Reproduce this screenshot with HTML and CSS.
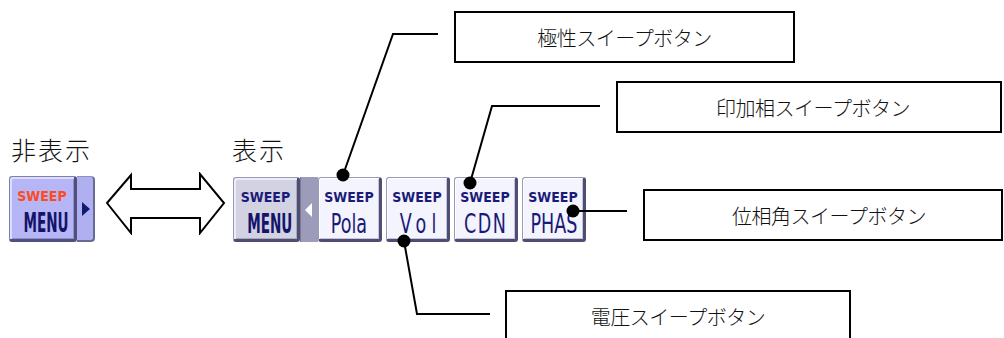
FILE: index.html
```html
<!DOCTYPE html>
<html lang="ja">
<head>
    <meta charset="UTF-8">
    <title>SWEEP MENU</title>
    <link rel="stylesheet" href="styles.css">
</head>
<body>
    <div class="page">
        <div class="stage">
            <div class="group">
                <div class="label">非表示</div>
                <div class="menu-closed">
                    <div class="face">
                        <span class="sw red">SWEEP</span>
                        <span class="big menu">MENU</span>
                    </div>
                    <div class="tab"><span class="tri-right"></span></div>
                </div>
            </div>

            <svg class="arrow" width="120" height="63" viewBox="0 0 120 63">
                <polygon points="1,31 25,3 25,17 94,17 94,2 118,31 94,61 94,46 25,46 25,61" fill="#fff" stroke="#000" stroke-width="2" stroke-linejoin="miter"/>
            </svg>

            <div class="group shown">
                <div class="label">表示</div>
                <div class="toolbar">
                    <div class="btn menu-btn">
                        <span class="sw">SWEEP</span>
                        <span class="big menu">MENU</span>
                    </div>
                    <div class="strip"><span class="tri-left"></span></div>
                    <div class="btn">
                        <span class="sw">SWEEP</span>
                        <span class="big">Pola</span>
                    </div>
                    <div class="btn">
                        <span class="sw">SWEEP</span>
                        <span class="big vol">Vol</span>
                    </div>
                    <div class="btn">
                        <span class="sw">SWEEP</span>
                        <span class="big cdn">CDN</span>
                    </div>
                    <div class="btn">
                        <span class="sw">SWEEP</span>
                        <span class="big">PHAS</span>
                    </div>
                </div>
            </div>
        </div>

        <!-- callouts -->
        <div class="callout c1">極性スイープボタン</div>
        <div class="callout c2">印加相スイープボタン</div>
        <div class="callout c3">位相角スイープボタン</div>
        <div class="callout c4">電圧スイープボタン</div>

        <svg class="leaders" width="1004" height="338" viewBox="0 0 1004 338">
            <g fill="none" stroke="#000" stroke-width="2">
                <path d="M343 175 L393 34 H438"/>
                <path d="M470 183 L492 106 H600"/>
                <path d="M573 211 H627"/>
                <path d="M404 241 L417 314 H490"/>
            </g>
            <g fill="#000">
                <circle cx="343" cy="175" r="6.5"/>
                <circle cx="470" cy="183" r="6.5"/>
                <circle cx="573" cy="211" r="6.5"/>
                <circle cx="404" cy="241" r="6.5"/>
            </g>
        </svg>
    </div>
</body>
</html>
```

FILE: styles.css
```css
body {
    margin: 0;
    background: #fff;
    font-family: "Noto Sans CJK JP", sans-serif;
}
.page {
    position: relative;
    width: 1004px;
    height: 338px;
    overflow: hidden;
    background: #fff;
}
.stage {
    display: flex;
    align-items: flex-start;
    padding: 137px 0 0 9px;
}
.group {
    display: flex;
    flex-direction: column;
}
.label {
    font-size: 25px;
    line-height: 25px;
    font-weight: 300;
    letter-spacing: 2px;
    color: #111;
    margin: 0 0 14px 2px;
}
.shown {
    margin-left: 7px;
}
.shown .label {
    margin-left: -1px;
}
.arrow {
    display: block;
    margin: 35px 0 0 11px;
}

/* buttons */
.sw, .big {
    display: block;
    font-family: "DejaVu Sans Condensed", "DejaVu Sans", sans-serif;
    color: #1a1a78;
    text-align: center;
    white-space: nowrap;
}
.sw {
    font-size: 14px;
    line-height: 14px;
    font-weight: bold;
    margin-top: 12px;
}
.sw.red {
    color: #ff4a1c;
}
.big {
    font-size: 26px;
    line-height: 26px;
    margin-top: 7px;
    transform: scaleX(0.75);
}
.big.menu {
    font-weight: bold;
    transform: scaleX(0.58);
    color: #14146a;
}
.big.vol {
    letter-spacing: 7px;
    text-indent: 7px;
}
.big.cdn {
    letter-spacing: 2px;
    text-indent: 2px;
}

.menu-closed {
    display: flex;
    height: 66px;
}
.menu-closed .face {
    box-sizing: border-box;
    width: 68px;
    height: 66px;
    background: #b6b6f6;
    border: 1px solid #8080b0;
    border-right: 3px solid #50507e;
    border-bottom: 3px solid #50507e;
    border-radius: 3px;
    box-shadow: inset 2px 2px 0 #dcdcff, inset -1px -1px 0 #9090d0;
}
.menu-closed .face .sw {
    margin-top: 12px;
}
.tab {
    box-sizing: border-box;
    width: 18px;
    height: 66px;
    background: #b0b0f0;
    border: 1px solid #9090c8;
    border-left: none;
    border-right: 2px solid #6a6a98;
    border-bottom: 2px solid #6a6a98;
    border-radius: 0 4px 4px 0;
    display: flex;
    align-items: center;
    justify-content: center;
}
.tri-right {
    width: 0;
    height: 0;
    border-top: 7px solid transparent;
    border-bottom: 7px solid transparent;
    border-left: 8px solid #101a70;
    margin-left: 2px;
}

.toolbar {
    display: flex;
    margin-top: 1px;
}
.btn {
    box-sizing: border-box;
    width: 64px;
    height: 65px;
    margin-right: 4px;
    background: #f4f4fe;
    border: 1px solid #9a9ab8;
    border-right: 3px solid #4e4e70;
    border-bottom: 3px solid #4e4e70;
    border-radius: 3px;
    box-shadow: inset 1px 1px 0 #fff, inset -1px -1px 0 #c4c4dc;
}
.btn.menu-btn {
    width: 67px;
    margin-right: 0;
    background: #d2d2e2;
    box-shadow: inset 2px 2px 0 #ececf6, inset -1px -1px 0 #a8a8c0;
}
.strip {
    width: 18px;
    height: 65px;
    background: #9c9cba;
    border-left: 1px solid #7a7a98;
    box-sizing: border-box;
    display: flex;
    align-items: center;
    justify-content: center;
}
.tri-left {
    width: 0;
    height: 0;
    border-top: 7px solid transparent;
    border-bottom: 7px solid transparent;
    border-right: 7px solid #fff;
    margin-right: 3px;
}

/* callouts on the diagram */
.callout {
    position: absolute;
    box-sizing: border-box;
    height: 52px;
    border: 2px solid #000;
    background: #fff;
    display: flex;
    align-items: center;
    justify-content: center;
    font-size: 20px;
    font-weight: 300;
    letter-spacing: -0.5px;
    color: #111;
}
.c1 { left: 454px; top: 11px; width: 341px; }
.c2 { left: 616px; top: 81px; width: 386px; padding-left: 8px; }
.c3 { left: 643px; top: 189px; width: 360px; padding-left: 12px; }
.c4 { left: 505px; top: 290px; width: 346px; }

.leaders {
    position: absolute;
    left: 0;
    top: 0;
    pointer-events: none;
}
```
